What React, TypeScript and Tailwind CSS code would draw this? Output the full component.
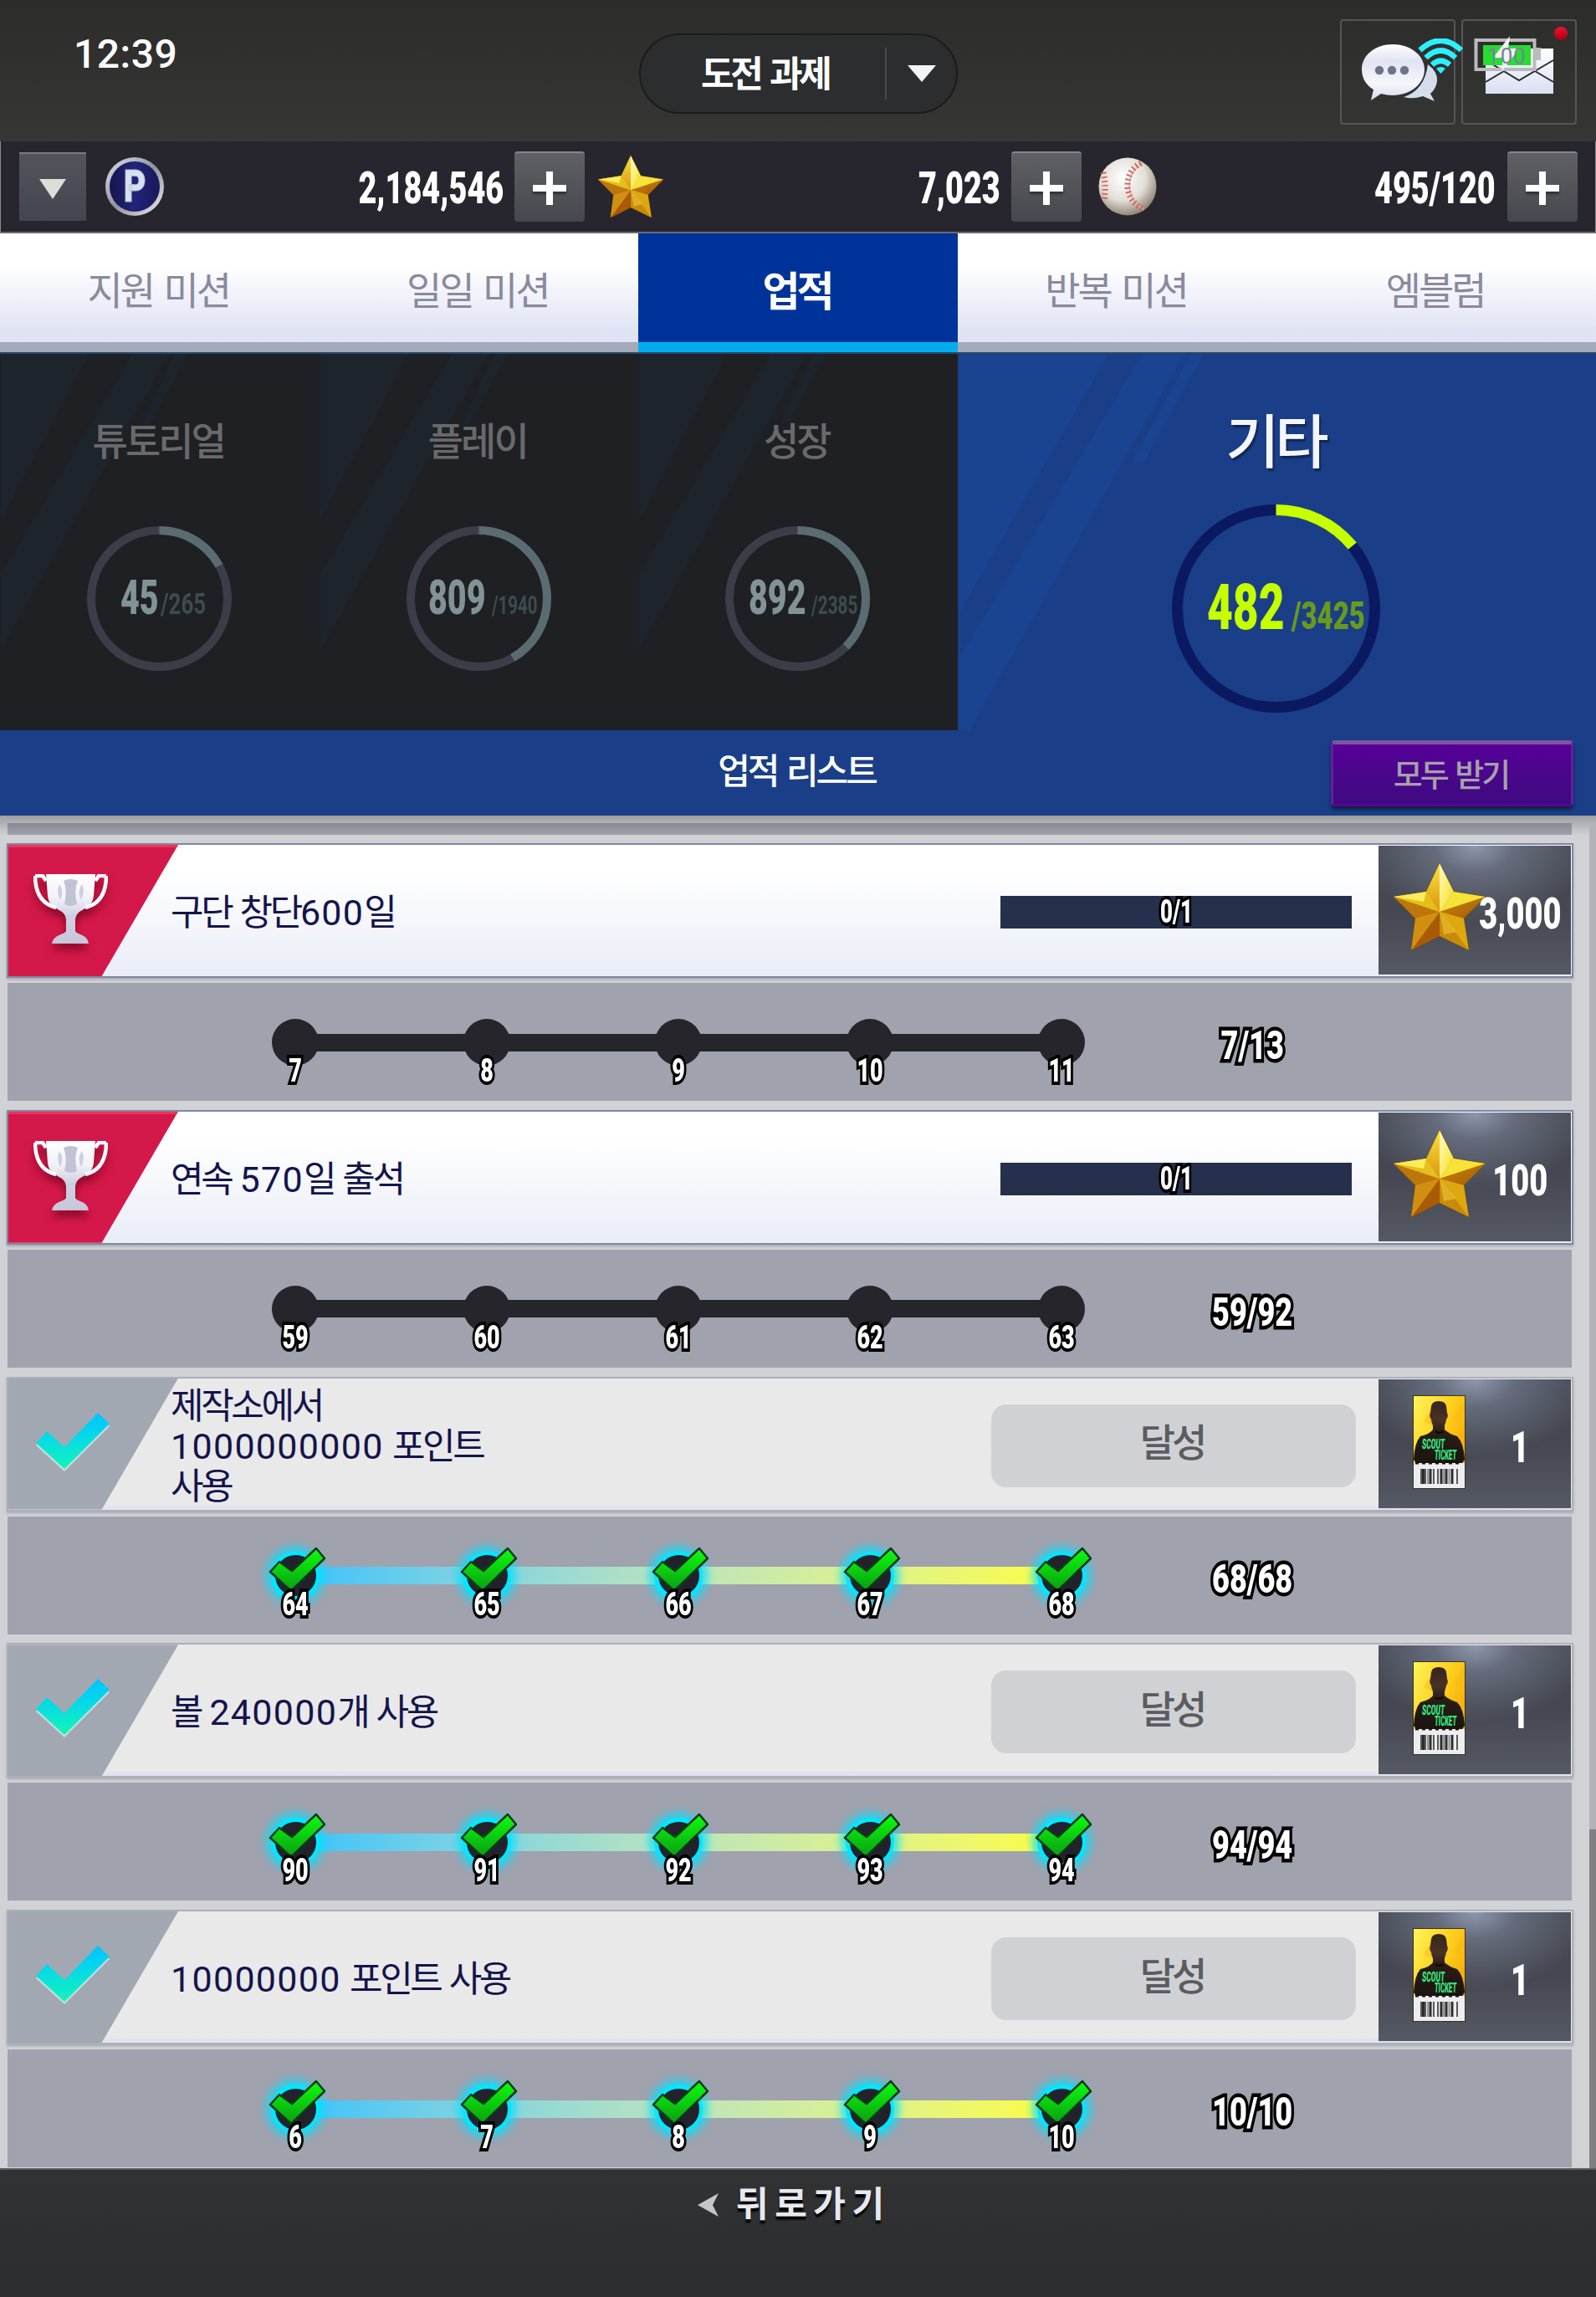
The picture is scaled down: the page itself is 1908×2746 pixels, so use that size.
import React from "react";

type Tab = { label: string; active?: boolean };

const TABS: Tab[] = [
    { label: "지원 미션" },
    { label: "일일 미션" },
    { label: "업적", active: true },
    { label: "반복 미션" },
    { label: "엠블럼" },
];

type Category = { label: string; done: number; total: number; pad: string; doneWidth: string; totalSize: string };

const CATEGORIES: Category[] = [
    { label: "튜토리얼", done: 45, total: 265, pad: "pl-[144px]", doneWidth: "w-[48px]", totalSize: "text-[35px] scale-x-[0.74]" },
    { label: "플레이", done: 809, total: 1940, pad: "pl-[130px]", doneWidth: "w-[76px]", totalSize: "text-[31px] scale-x-[0.66]" },
    { label: "성장", done: 892, total: 2385, pad: "pl-[132px]", doneWidth: "w-[75px]", totalSize: "text-[31px] scale-x-[0.67]" },
];

type Achievement = {
    id: string;
    lines: string[];
    complete: boolean;
    reward: "star" | "ticket";
    amount: string;
    steps: number[];
    count: string;
};

const ACHIEVEMENTS: Achievement[] = [
    { id: "club600", lines: ["구단 창단600일"], complete: false, reward: "star", amount: "3,000", steps: [7, 8, 9, 10, 11], count: "7/13" },
    { id: "attend570", lines: ["연속 570일 출석"], complete: false, reward: "star", amount: "100", steps: [59, 60, 61, 62, 63], count: "59/92" },
    { id: "workshop", lines: ["제작소에서", "1000000000 포인트", "사용"], complete: true, reward: "ticket", amount: "1", steps: [64, 65, 66, 67, 68], count: "68/68" },
    { id: "balls", lines: ["볼 240000개 사용"], complete: true, reward: "ticket", amount: "1", steps: [90, 91, 92, 93, 94], count: "94/94" },
    { id: "points", lines: ["10000000 포인트 사용"], complete: true, reward: "ticket", amount: "1", steps: [6, 7, 8, 9, 10], count: "10/10" },
];

const StarIcon: React.FC<{ className: string }> = ({ className }) => (
    <svg viewBox="0 0 110 104" preserveAspectRatio="none" className={className}>
        <defs>
            <linearGradient id="starLight" x1="0" y1="0" x2="1" y2="1">
                <stop offset="0" stopColor="#fffbd0" />
                <stop offset="0.5" stopColor="#fbee6a" />
                <stop offset="1" stopColor="#f3d21c" />
            </linearGradient>
            <linearGradient id="starMid" x1="0" y1="0" x2="0" y2="1">
                <stop offset="0" stopColor="#fbe23c" />
                <stop offset="1" stopColor="#d9960f" />
            </linearGradient>
            <linearGradient id="starDark" x1="0" y1="0" x2="1" y2="1">
                <stop offset="0" stopColor="#c9850c" />
                <stop offset="1" stopColor="#a25a05" />
            </linearGradient>
        </defs>
        <path d="M55 0 L72 34 L110 40 L84 66 L90 104 L55 87 L21 104 L26 66 L0 40 L39 34 Z" fill="#dca212" stroke="#5e4208" strokeWidth="1" />
        <path d="M55 0 L39 34 L55 58 Z" fill="url(#starMid)" />
        <path d="M55 0 L72 34 L55 58 Z" fill="url(#starLight)" />
        <path d="M110 40 L72 34 L55 58 Z" fill="#f6e238" />
        <path d="M110 40 L84 66 L55 58 Z" fill="url(#starDark)" />
        <path d="M84 66 L90 104 L55 58 Z" fill="#dda80f" />
        <path d="M90 104 L55 87 L55 58 Z" fill="#c98a0c" />
        <path d="M21 104 L55 87 L55 58 Z" fill="#a95a04" />
        <path d="M26 66 L21 104 L55 58 Z" fill="#d18f12" />
        <path d="M0 40 L26 66 L55 58 Z" fill="#bd7609" />
        <path d="M0 40 L39 34 L55 58 Z" fill="#e6bf1c" />
        <path d="M39 34 L0 40 L36 46 Z" fill="#f9ec5a" />
        <path d="M55 58 L60 85 L75 82 Z" fill="#efc93a" opacity="0.6" />
    </svg>
);

const TrophyIcon: React.FC = () => (
    <svg viewBox="0 0 89 83" className="h-[83px] w-[89px] drop-shadow-[0_8px_5px_rgba(90,0,20,0.55)]">
        <defs>
            <linearGradient id="cup" x1="0" y1="0" x2="0" y2="1">
                <stop offset="0" stopColor="#ffffff" />
                <stop offset="0.35" stopColor="#f1f1f7" />
                <stop offset="0.6" stopColor="#cfd0e2" />
                <stop offset="1" stopColor="#c6c7da" />
            </linearGradient>
        </defs>
        <path d="M15 0 H74 L72 26 C71 37 63 40 55 45 Q51 48 50 54 V68 C52 73 64 71 66 83 H22 C25 71 37 73 39 68 V54 Q38 48 34 45 C26 40 18 37 17 26 Z" fill="url(#cup)" />
        <path d="M2 2 H11 L15 8 M2 2 C2 24 11 36 27 40 M87 2 H78 L74 8 M87 2 C87 24 78 36 62 40" fill="none" stroke="#fbfbfd" strokeWidth="4.5" />
        <path d="M36 8 Q44 4 53 8 Q48 20 52 36 Q44 40 37 36 Q41 20 36 8 Z" fill="#c0c2d6" />
        <path d="M31 12 Q37 20 32 31 Q27 21 31 12 Z M58 12 Q52 20 57 31 Q62 21 58 12 Z" fill="#cdcee0" />
    </svg>
);

const DoneIcon: React.FC = () => (
    <svg viewBox="0 0 90 70" className="h-[70px] w-[90px]">
        <defs>
            <linearGradient id="doneCheck" x1="0" y1="0" x2="0" y2="1">
                <stop offset="0" stopColor="#00c2ff" />
                <stop offset="0.4" stopColor="#05d8ea" />
                <stop offset="1" stopColor="#12f5b6" />
            </linearGradient>
        </defs>
        <path d="M1 39 L14 24 L35 43 L75 2 L89 16 L35 70 Z" fill="#c3dce0" />
        <path d="M1 36 L14 22 L35 41 L75 0 L89 13 L35 67 Z" fill="url(#doneCheck)" />
    </svg>
);

const TicketIcon: React.FC = () => (
    <div className="relative h-[112px] w-[63px] border border-[#3a3424] bg-[#ededf0]">
        <svg viewBox="0 0 61 110" className="h-full w-full">
            <defs>
                <linearGradient id="ticketBg" x1="0" y1="0" x2="1" y2="0.6">
                    <stop offset="0" stopColor="#fff45a" />
                    <stop offset="0.6" stopColor="#fdd01c" />
                    <stop offset="1" stopColor="#f9b00c" />
                </linearGradient>
                <linearGradient id="player" x1="0" y1="0" x2="0" y2="1">
                    <stop offset="0" stopColor="#35241a" />
                    <stop offset="0.3" stopColor="#4a3226" />
                    <stop offset="0.5" stopColor="#2a1d16" />
                    <stop offset="1" stopColor="#1b140f" />
                </linearGradient>
            </defs>
            <rect width="61" height="80" fill="url(#ticketBg)" />
            <path d="M12 30 L22 14 L32 40 Z M46 28 L60 6 V30 Z" fill="#f6b913" opacity="0.5" />
            <path d="M21 12 Q22 6 30 6 Q38 6 39 12 L40 20 Q42 24 39 28 Q38 33 37 35 V40 Q42 45 52 48 Q60 56 61 76 L58 80 H3 L0 76 Q1 56 8 48 Q20 45 23 40 V35 Q21 31 21 28 Q18 24 20 20 Z" fill="url(#player)" />
            <path d="M26 42 Q30 46 35 42" stroke="#080605" strokeWidth="2" fill="none" />
            <path d="M2 80 h56" stroke="#1a1611" strokeWidth="3" strokeDasharray="4 4" />
            <path d="M9 87v18M14 87v18M24 87v18M29 87v18M52 87v18" stroke="#333" strokeWidth="1.6" />
            <path d="M11.5 87v18M20 87v18M33 87v18M39 87v18M46 87v18" stroke="#2e2e2e" strokeWidth="3" />
            <path d="M17 87v18M36 87v18M42.5 87v18" stroke="#777" strokeWidth="1.5" />
        </svg>
        <div className="absolute top-[49px] left-[10px] origin-left -skew-x-6 scale-x-[0.49] font-['Roboto'] text-[17px] leading-none font-black text-[#35e882]">SCOUT</div>
        <div className="absolute top-[62px] left-[25px] origin-left -skew-x-6 scale-x-[0.45] font-['Roboto'] text-[17px] leading-none font-black text-[#35e882]">TICKET</div>
    </div>
);

const ChatIcon: React.FC = () => (
    <svg viewBox="0 0 122 76" className="absolute top-[21px] left-[23px] h-[76px] w-[122px]">
        <defs>
            <linearGradient id="bubble" x1="0" y1="0" x2="0" y2="1">
                <stop offset="0" stopColor="#ffffff" />
                <stop offset="0.3" stopColor="#e0e3f2" />
                <stop offset="0.7" stopColor="#f6f7fb" />
                <stop offset="1" stopColor="#d9d8f0" />
            </linearGradient>
        </defs>
        <path d="M80 31 Q92 40 91 51 Q90 60 83 66 L88 75 L74 69 Q62 73 51 70 Q76 62 80 31 Z" fill="#d5dcec" />
        <path d="M38 7 C59 7 76 20 76 37 C76 54 59 68 38 68 Q31 68 24 66 L12 74 L15 61 C6 56 1 47 1 37 C1 20 17 7 38 7 Z" fill="url(#bubble)" />
        <circle cx="22" cy="38" r="5.2" fill="#6e7488" />
        <circle cx="37" cy="38" r="5.2" fill="#6e7488" />
        <circle cx="52" cy="38" r="5.2" fill="#6e7488" />
        <g fill="none" stroke="#2df0ff" strokeWidth="6.5">
            <path d="M70.500 14 Q95.500 -9 120 14" />
            <path d="M77.500 23 Q95.500 6 113 23" />
            <path d="M85 31.500 Q95.500 22 106 31.500" />
        </g>
        <path d="M90 36 Q95.500 32 101 36 L95.500 42 Z" fill="#2df0ff" />
    </svg>
);

const MailIcon: React.FC = () => (
    <>
        <svg viewBox="0 0 96 74" className="absolute top-[16px] left-[13px] h-[74px] w-[96px]">
            <defs>
                <linearGradient id="mail" x1="0" y1="0" x2="0" y2="1">
                    <stop offset="0" stopColor="#ffffff" />
                    <stop offset="1" stopColor="#d9def2" />
                </linearGradient>
            </defs>
            <rect x="14" y="17" width="81" height="54" fill="url(#mail)" />
            <path d="M14 57 L36 44 M73 44 L95 57 M14 31 L54 55 L95 31" fill="none" stroke="#2a2a30" strokeWidth="2" />
            <rect x="2.500" y="7" width="70" height="35" fill="none" stroke="#b9bbbd" strokeWidth="4" />
            <rect x="74" y="16" width="6" height="15" fill="#b9bbbd" />
            <rect x="11" y="13" width="57" height="24" fill="#25de2f" />
            <path d="M43 2 L23 28 H35 L33 45 L54 17 H41 Z" fill="#f2f4f6" />
        </svg>
        <div className="absolute top-[29px] left-[24px] w-[57px] text-center font-['Roboto'] text-[26px] leading-none tracking-[1px] text-[#7b8196]">100</div>
        <div className="absolute top-[7px] right-[9px] h-[16px] w-[16px] rounded-full bg-gradient-to-b from-[#f01530] to-[#a80010]" />
    </>
);

const PointIcon: React.FC = () => (
    <div className="flex h-[70px] w-[70px] items-center justify-center rounded-full bg-gradient-to-br from-[#dfe7ee] via-[#8d929c] to-[#f1f1f4] p-[5px]">
        <div className="flex h-full w-full items-center justify-center rounded-full bg-gradient-to-r from-[#16164e] via-[#23237c] to-[#191959]">
            <span className="scale-x-[0.78] font-['Roboto'] text-[53px] leading-none font-black text-[#d6e3ee] [-webkit-text-stroke:1px_#b4c1d4]">P</span>
        </div>
    </div>
);

const BallIcon: React.FC = () => (
    <svg viewBox="0 0 70 70" className="h-[70px] w-[70px]">
        <defs>
            <radialGradient id="ball" cx="0.42" cy="0.35" r="0.65">
                <stop offset="0" stopColor="#ffffff" />
                <stop offset="0.6" stopColor="#e3dfd8" />
                <stop offset="1" stopColor="#93877a" />
            </radialGradient>
        </defs>
        <circle cx="35" cy="35" r="34.500" fill="url(#ball)" />
        <path d="M53 7 Q37 16 37 36 Q39 54 54 62" fill="none" stroke="#c9b5ac" strokeWidth="1.500" />
        <path d="M51 7 Q34 16 35 36 Q37 54 53 61" fill="none" stroke="#d9625c" strokeWidth="7" strokeDasharray="1.800 3.200" />
        <path d="M6 18 Q10 36 7 52" fill="none" stroke="#d9625c" strokeWidth="7" strokeDasharray="1.800 3.200" />
    </svg>
);

const PlusButton: React.FC = () => (
    <div className="relative h-[84px] w-[84px] rounded-[4px] border-t-2 border-[#85868a] bg-gradient-to-b from-[#5f6065] to-[#45484e]">
        <span className="absolute top-[38px] left-[22px] h-[8px] w-[40px] bg-white shadow-[0_3px_3px_rgba(0,0,0,0.4)]" />
        <span className="absolute top-[22px] left-[38px] h-[40px] w-[8px] bg-white" />
    </div>
);

/* progress ring, starts at 12 o'clock */
const Ring: React.FC<{ size: number; stroke: number; ratio: number; track: string; fill: string; className: string }> = ({ size, stroke, ratio, track, fill, className }) => {
    const r = (size - stroke) / 2;
    const len = 2 * Math.PI * r;
    return (
        <svg viewBox={`0 0 ${size} ${size}`} className={className}>
            <circle cx={size / 2} cy={size / 2} r={r} fill="none" stroke={track} strokeWidth={stroke} />
            <circle
                cx={size / 2}
                cy={size / 2}
                r={r}
                fill="none"
                stroke={fill}
                strokeWidth={stroke}
                strokeDasharray={`${len * ratio} ${len}`}
                transform={`rotate(-90 ${size / 2} ${size / 2})`}
            />
        </svg>
    );
};

/* digits are set wider than the hangul around them */
const Title: React.FC<{ text: string }> = ({ text }) => (
    <div className="h-[48px] whitespace-pre">
        {text.split(/(\d+)/).map((part, i) =>
            /^\d+$/.test(part) ? (
                <span key={i} className="font-['Roboto'] tracking-[1.3px]">{part}</span>
            ) : (
                <span key={i}>{part}</span>
            )
        )}
    </div>
);

const StepNode: React.FC<{ value: number; complete: boolean }> = ({ value, complete }) => (
    <div className="relative flex h-[56px] w-[56px] items-center justify-center">
        {complete ? (
            <>
                <div className="absolute h-[58px] w-[58px] rounded-full bg-[#00e8ff] shadow-[0_0_10px_7px_#00e0ffb0]" />
                <div className="absolute h-[49px] w-[49px] rounded-full bg-[#23222c]" />
                <svg viewBox="-34 -38 74 60" className="absolute -top-[10px] -left-[6px] h-[60px] w-[74px]">
                    <defs>
                        <linearGradient id="stepCheck" x1="0" y1="0" x2="0" y2="1">
                            <stop offset="0" stopColor="#0cff0c" />
                            <stop offset="1" stopColor="#0a9d12" />
                        </linearGradient>
                    </defs>
                    <path d="M-30 -5 L-19 -17 L-4 -6 L25 -33 L35 -21 L-5 18 Z" fill="url(#stepCheck)" stroke="#0c3a1c" strokeWidth="2.500" strokeLinejoin="round" />
                </svg>
            </>
        ) : (
            <div className="absolute h-[56px] w-[56px] rounded-full bg-[#26252b]" />
        )}
        <span className="absolute top-[43px] scale-x-[0.71] font-['Roboto'] text-[38px] leading-none font-black text-white [-webkit-text-stroke:8px_#000] [paint-order:stroke_fill]">{value}</span>
    </div>
);

const AchievementRow: React.FC<{ item: Achievement }> = ({ item }) => (
    <div className="h-[318.75px]">
        <div
            className={`relative ml-2 flex h-[161px] w-[1873px] border-2 shadow-[0_2px_3px_rgba(0,0,0,0.2)] ${
                item.complete ? "border-[#aab0bb] bg-gradient-to-b from-[#e9e9e9] from-[97%] to-[#e2e2f1] to-[97%]" : "border-[#7d88a3] bg-gradient-to-b from-white from-20% to-[#e9edf7]"
            }`}
        >
            <div
                className={`h-full w-[203px] shrink-0 [clip-path:polygon(0_0,100%_0,55%_100%,0_100%)] ${
                    item.complete ? "bg-[#a2a8b2] pt-[41px] pl-[32px]" : "border-t-[3px] border-[#f0335f] bg-[#d5184a] pt-[32px] pl-[30px]"
                }`}
            >
                {item.complete ? <DoneIcon /> : <TrophyIcon />}
            </div>
            <div className="-mt-[3px] -ml-[9px] flex w-[981px] shrink-0 flex-col justify-center font-['Noto_Sans_CJK_KR',sans-serif] text-[43px] leading-[48px] tracking-[-3.4px] text-[#14144c] [word-spacing:4px]">
                {item.lines.map((line) => (
                    <Title key={line} text={line} />
                ))}
            </div>
            <div className="flex w-[463px] shrink-0 items-center pt-[4px]">
                {item.complete ? (
                    <div className="flex h-[99px] w-[436px] items-center justify-center rounded-[18px] bg-[#d0d1d5] font-['Noto_Sans_CJK_KR',sans-serif] text-[46px] leading-none font-medium tracking-[-4px] text-[#5b5c60]">
                        <span className="-mt-[14px] -ml-[4px]">달성</span>
                    </div>
                ) : (
                    <div className="ml-[11px] flex h-[39px] w-[420px] items-center justify-center bg-[#26304c]">
                        <span className="scale-x-[0.66] font-['Roboto'] text-[39px] leading-none font-black text-white [-webkit-text-stroke:8px_#000] [paint-order:stroke_fill]">0/1</span>
                    </div>
                )}
            </div>
            <div className="relative mt-px h-[154px] w-[230px] shrink-0 bg-gradient-to-b from-[#454852] from-50% to-[#555963] pt-[21px]">
                <div className="absolute inset-0 bg-[radial-gradient(ellipse_60%_60%_at_50%_0%,#8e97ad_0%,#757d90aa_35%,transparent_100%)]" />
                {item.reward === "star" ? (
                    <StarIcon className="relative ml-[18px] h-[104px] w-[110px]" />
                ) : (
                    <div className="relative -mt-[2px] ml-[41px]">
                        <TicketIcon />
                    </div>
                )}
                <div className="absolute top-[56px] left-[94px] flex w-[150px] justify-center">
                    <span className="scale-x-[0.73] font-['Roboto'] text-[52px] leading-none font-black text-white">{item.amount}</span>
                </div>
            </div>
        </div>
        <div className="mt-[6px] ml-[9px] flex h-[141px] w-[1870px] bg-[#a0a2ae]">
            <div className="relative mt-[43px] ml-[316px] flex h-[56px] w-[972px] items-center justify-between">
                <div className={`absolute right-[28px] left-[28px] h-[21px] ${item.complete ? "bg-gradient-to-r from-[#35c2fb] via-[#bce4bc] to-[#fdfd38]" : "bg-[#26252b]"}`} />
                {item.steps.map((s) => (
                    <StepNode key={s} value={s} complete={item.complete} />
                ))}
            </div>
            <div className="mt-[51px] ml-[100px] flex w-[200px] justify-center">
                <span className="scale-x-[0.75] font-['Roboto'] text-[48px] leading-none font-black text-white [-webkit-text-stroke:9px_#000] [paint-order:stroke_fill]">{item.count}</span>
            </div>
        </div>
    </div>
);

const Header: React.FC = () => (
    <header className="relative flex h-[169px] justify-between bg-gradient-to-b from-[#2c2c2b] to-[#363634]">
        <div className="mt-[41px] ml-[88px] w-[200px] font-['Roboto'] text-[48px] leading-none font-medium tracking-[0.5px] text-white">12:39</div>
        <div className="absolute top-[40px] left-[764px] flex h-[96px] w-[381px] items-center rounded-full border-2 border-[#1c1c1d] bg-[#2b2d2f]">
            <span className="-mt-[6px] w-[292px] pl-[72px] font-['Noto_Sans_CJK_KR',sans-serif] text-[43px] leading-none font-bold tracking-[-4.3px] whitespace-nowrap text-white [word-spacing:6px]">도전 과제</span>
            <span className="h-[62px] w-[2px] bg-[#4a4b4d]" />
            <svg viewBox="0 0 34 20" className="ml-[25px] h-[20px] w-[34px]">
                <path d="M0 0 H34 L17 20 Z" fill="#f4f4f4" />
            </svg>
        </div>
        <div className="mt-[23px] mr-[23px] flex gap-[7px]">
            <div className="relative z-10 h-[126px] w-[138px] rounded-[4px] border-2 border-[#565656]">
                <ChatIcon />
            </div>
            <div className="relative h-[126px] w-[138px] rounded-[4px] border-2 border-[#565656]">
                <MailIcon />
            </div>
        </div>
    </header>
);

const Amount: React.FC<{ value: string; className: string }> = ({ value, className }) => (
    <div className={`flex justify-end pt-[3px] ${className}`}>
        <span className="origin-right scale-x-[0.7] font-['Roboto'] text-[54px] leading-none font-black text-white">{value}</span>
    </div>
);

const ResourceBar: React.FC = () => (
    <div className="flex h-[110px] items-center border-x border-b-2 border-x-[#8a8a8e] border-b-[#6b6c70] bg-[#27262f]">
        <div className="ml-[22px] flex h-[82px] w-[80px] items-center justify-center border-t-2 border-[#7c7b82] bg-gradient-to-b from-[#54535c] to-[#42464f]">
            <svg viewBox="0 0 32 24" className="mt-1 h-[24px] w-[32px]">
                <path d="M0 0 H32 L16 24 Z" fill="#dcdcd9" />
            </svg>
        </div>
        <div className="ml-[23px]"><PointIcon /></div>
        <Amount value="2,184,546" className="mr-[13px] w-[406px]" />
        <PlusButton />
        <StarIcon className="ml-[16px] h-[74px] w-[78px]" />
        <Amount value="7,023" className="mr-[13px] w-[403px]" />
        <PlusButton />
        <div className="ml-[20px]"><BallIcon /></div>
        <Amount value="495/120" className="mr-[14px] w-[405px]" />
        <PlusButton />
    </div>
);

const App: React.FC = () => (
    <div className="flex h-[2746px] w-[1908px] flex-col overflow-hidden bg-[#d1d2d6] font-['Noto_Sans_CJK_KR',sans-serif]">
        <Header />
        <ResourceBar />

        <nav className="grid h-[142px] grid-cols-5">
            {TABS.map((tab) => (
                <div
                    key={tab.label}
                    className={`flex items-center justify-center border-b-[12px] pr-[3px] leading-none ${
                        tab.active
                            ? "border-[#00aeef] bg-[#003399] text-[49px] font-bold tracking-[-4px] text-white"
                            : "border-[#a3aab8] bg-gradient-to-b from-white from-30% to-[#e0e3f4] to-90% text-[46px] tracking-[-3px] text-[#8a8a9d] [word-spacing:5px]"
                    }`}
                >
                    {tab.label}
                </div>
            ))}
        </nav>

        <section className="flex h-[452px] shrink-0 border-t-2 border-[#2b4868] bg-[#1a3f88]">
            {CATEGORIES.map((c) => (
                <div key={c.label} className="relative h-full w-[381.5px] bg-[#1f2024]">
                    <svg viewBox="0 0 381 451" className="absolute inset-0 h-full w-full">
                        <path d="M0 0 H106 L0 200 Z M158 0 H202 L0 355 V265 Z M209 0 H224 L180 83 H170 Z" fill="#1e242b" />
                    </svg>
                    <div className="relative pt-[78px] pr-[3px] text-center text-[46px] leading-none font-medium tracking-[-3px] text-[#696a6b]">{c.label}</div>
                    <Ring size={173} stroke={10} ratio={c.done / c.total} track="#3b3e48" fill="#5a6c71" className="relative mt-[82px] ml-[104px] h-[173px] w-[173px]" />
                    <div className={`absolute top-[262px] flex items-baseline font-['Roboto'] leading-none ${c.pad}`}>
                        <span className={c.doneWidth}>
                            <span className="inline-block origin-left scale-x-[0.68] text-[58px] font-black text-[#829398]">{c.done}</span>
                        </span>
                        <span className={`inline-block origin-left font-bold text-[#3d4c4e] ${c.totalSize}`}>/{c.total}</span>
                    </div>
                </div>
            ))}
            <div className="relative h-full flex-1">
                <svg viewBox="0 0 763 452" className="absolute inset-0 h-full w-full">
                    <path d="M0 0 H179 L0 311 Z M220 0 H270 L12 452 H0 V365 Z M278 0 H293 L221 131 H207 Z" fill="#1a4391" />
                </svg>
                <div className="relative pt-[66px] pr-[4px] text-center text-[70px] leading-none font-medium tracking-[-5.5px] text-[#f4f5fb] [text-shadow:2px_3px_2px_rgba(0,0,0,0.4)]">기타</div>
                <Ring size={249} stroke={13} ratio={482 / 3425} track="#0b1a60" fill="#c6ff00" className="relative mt-[44px] ml-[256px] h-[249px] w-[249px]" />
                <div className="absolute top-[265px] left-[298px] flex items-baseline font-['Roboto'] leading-none">
                    <span className="w-[101px]">
                        <span className="inline-block origin-left scale-x-[0.7] text-[76px] font-black text-[#c6ff00]">482</span>
                    </span>
                    <span className="inline-block origin-left scale-x-[0.7] text-[47px] font-black text-[#689a1e]">/3425</span>
                </div>
            </div>
        </section>

        <section className="relative flex h-[102px] shrink-0 items-center justify-end bg-[#1a3f88] pr-[27px]">
            <h2 className="absolute inset-x-0 top-[25px] pr-[3px] text-center text-[42px] leading-none font-medium tracking-[-3px] text-white [word-spacing:4px]">업적 리스트</h2>
            <button className="relative h-[79px] w-[290px] rounded-[5px] border-x-[3px] border-t-[5px] border-b-[3px] border-x-[#62209c] border-t-[#80529c] border-b-[#5c0098] bg-gradient-to-b from-[#560098] to-[#3e0a80] pr-[3px] pb-[3px] text-[38px] leading-none font-medium tracking-[-3px] text-[#a5a1aa] shadow-[0_4px_4px_rgba(0,0,0,0.5)] [word-spacing:4px]">
                모두 받기
            </button>
        </section>

        <main className="relative h-[1617px] shrink-0 overflow-hidden">
            <div className="mt-[9px] ml-[9px] h-[14px] w-[1870px] bg-[#a0a2ae]" />
            <div className="pt-[10px]">
                {ACHIEVEMENTS.map((item) => (
                    <AchievementRow key={item.id} item={item} />
                ))}
            </div>
            <div className="absolute top-0 left-0 h-[24px] w-full bg-gradient-to-b from-black/25 to-transparent" />
            <div className="absolute top-[9px] right-0 h-full w-[8px] bg-[#b3b2b8]">
                <div className="mt-[1203px] h-[420px] bg-[#7f7f83]" />
            </div>
        </main>

        <footer className="relative flex flex-1 items-start border-t-2 border-[#5c5c60] bg-gradient-to-b from-[#313234] to-[#2c2d2f] pt-[18px] pl-[834px]">
            <svg viewBox="0 0 25 28" className="mt-[10px] h-[28px] w-[25px]">
                <path d="M25 0 L18 14 L25 28 L0 14 Z" fill="#c6c6c6" />
            </svg>
            <span className="-mt-px ml-[21px] text-[42px] leading-none font-bold tracking-[7.5px] text-[#e6e9ee] [text-shadow:0_4px_2px_#000]">뒤로가기</span>
        </footer>
    </div>
);

export default App;
